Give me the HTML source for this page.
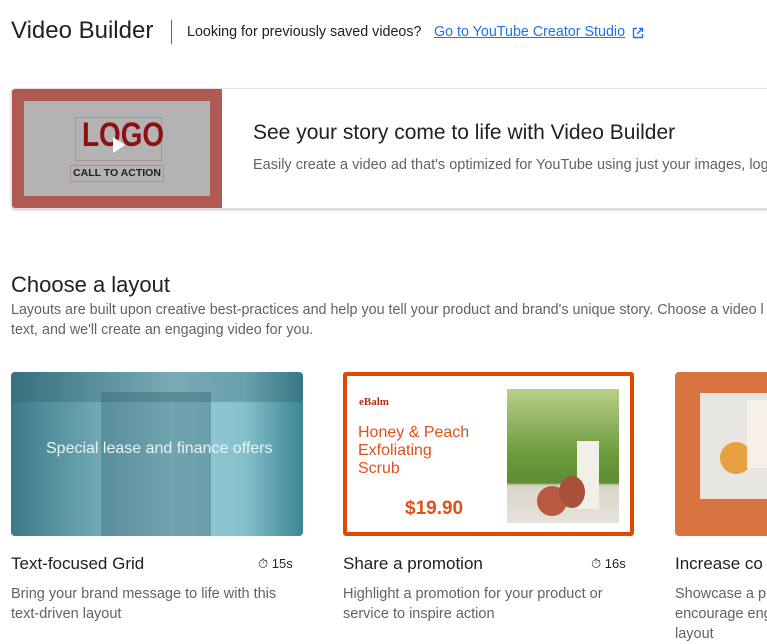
<!DOCTYPE html>
<html><head><meta charset="utf-8"><style>
body{margin:0;width:767px;height:637px;overflow:hidden;background:#fff;font-family:"Liberation Sans",Arial,sans-serif;color:#202124;position:relative}
.a{position:absolute;white-space:nowrap}
</style></head><body>
<div class="a" style="left:11px;top:17px;font-size:24px;color:#202124">Video Builder</div>
<div class="a" style="left:171px;top:20px;width:1px;height:24px;background:#5f6368"></div>
<div class="a" style="left:187px;top:24px;font-size:14.3px;color:#202124">Looking for previously saved videos?</div>
<div class="a" style="left:434px;top:24px;font-size:14.3px;color:#1a73e8;text-decoration:underline">Go to YouTube Creator Studio</div>
<svg class="a" style="left:632px;top:27px" width="12" height="12" viewBox="0 0 12 12"><path d="M5 1.5H1.5v9h9V7M7 1.5h3.5V5M10.5 1.5 5 7" fill="none" stroke="#1a73e8" stroke-width="1.4"/></svg>

<div class="a" style="left:11px;top:88px;width:780px;height:119px;border:1px solid #e3e3e3;border-radius:4px;box-shadow:0 1px 2px rgba(0,0,0,.25);overflow:hidden">
 <div class="a" style="left:0;top:0;width:210px;height:120px;background:#ae5a52"></div>
 <div class="a" style="left:12px;top:12px;width:186px;height:95px;background:#b3b3b3"></div>
 <div class="a" style="left:63px;top:28px;width:85px;height:42px;border:1px solid #b09090"></div>
 <div class="a" style="left:70px;top:27px;font-size:34px;font-weight:bold;color:#8e1010;transform:scaleX(.82);transform-origin:left">LOGO</div>
 <svg class="a" style="left:100px;top:47px" width="14" height="18"><path d="M1 1 13 9 1 17z" fill="#fff"/></svg>
 <div class="a" style="left:58px;top:76px;width:92px;height:15px;border:1px solid #b09090;font-size:10.5px;font-weight:bold;text-align:center;line-height:15px;color:#202124">CALL TO ACTION</div>
 <div class="a" style="left:241px;top:32px;font-size:21px;color:#202124">See your story come to life with Video Builder</div>
 <div class="a" style="left:241px;top:68px;font-size:14.5px;color:#5f6368">Easily create a video ad that's optimized for YouTube using just your images, logo</div>
</div>

<div class="a" style="left:11px;top:272px;font-size:22px;color:#202124">Choose a layout</div>
<div class="a" style="left:11px;top:300px;font-size:14.3px;color:#5f6368;line-height:20px">Layouts are built upon creative best-practices and help you tell your product and brand's unique story. Choose a video l<br>text, and we'll create an engaging video for you.</div>

<div class="a" style="left:11px;top:372px;width:292px;height:164px;border-radius:4px;overflow:hidden;background:linear-gradient(90deg,#3d7a88 0%,#6fa9b5 30%,#9ccfd9 55%,#84c0cc 80%,#3e8593 100%)">
 <div class="a" style="left:90px;top:20px;width:110px;height:144px;background:rgba(60,110,125,.45)"></div>
 <div class="a" style="left:0;top:0;width:292px;height:30px;background:rgba(40,90,100,.3)"></div>
 <div class="a" style="left:35px;top:68px;font-size:16px;color:#e8f4f6">Special lease and finance offers</div>
</div>
<div class="a" style="left:343px;top:372px;width:283px;height:156px;border:4px solid #e04a00;border-radius:3px;background:#fff">
 <div class="a" style="left:12px;top:20px;font-size:11px;font-family:'Liberation Serif',serif;font-weight:bold;color:#b03010">eBalm</div>
 <div class="a" style="left:11px;top:48px;font-size:16px;color:#e0501a;line-height:18px">Honey &amp; Peach<br>Exfoliating<br>Scrub</div>
 <div class="a" style="left:58px;top:122px;font-size:19px;font-weight:bold;color:#e0501a">$19.90</div>
 <div class="a" style="left:160px;top:13px;width:112px;height:134px;background:linear-gradient(180deg,#b8d08a 0%,#6a9a3a 50%,#5f8c35 70%,#d8d4c8 72%,#e8e4dc 100%)"></div>
 <div class="a" style="left:230px;top:65px;width:22px;height:68px;background:#f2efe8"></div>
 <div class="a" style="left:190px;top:110px;width:30px;height:30px;border-radius:50%;background:#b85a40"></div>
 <div class="a" style="left:212px;top:100px;width:26px;height:32px;border-radius:50%;background:#a8503a"></div>
</div>
<div class="a" style="left:675px;top:372px;width:100px;height:164px;border-radius:4px;background:#d8743f">
 <div class="a" style="left:25px;top:21px;width:80px;height:104px;background:#e8e6e2;border:1px solid #f0e0d0"></div>
 <div class="a" style="left:45px;top:70px;width:32px;height:32px;border-radius:50%;background:#e8a040"></div>
 <div class="a" style="left:72px;top:28px;width:20px;height:68px;background:#f5efe5"></div>
</div>

<div class="a" style="left:11px;top:554px;font-size:17px">Text-focused Grid</div>
<div class="a" style="left:258px;top:556px;font-size:13px">⏱ 15s</div>
<div class="a" style="left:11px;top:584px;font-size:14.5px;color:#5f6368;line-height:20px">Bring your brand message to life with this<br>text-driven layout</div>
<div class="a" style="left:343px;top:554px;font-size:17px">Share a promotion</div>
<div class="a" style="left:591px;top:556px;font-size:13px">⏱ 16s</div>
<div class="a" style="left:343px;top:584px;font-size:14.5px;color:#5f6368;line-height:20px">Highlight a promotion for your product or<br>service to inspire action</div>
<div class="a" style="left:675px;top:554px;font-size:17px">Increase co</div>
<div class="a" style="left:675px;top:584px;font-size:14.5px;color:#5f6368;line-height:20px">Showcase a pr<br>encourage eng<br>layout</div>
</body></html>
